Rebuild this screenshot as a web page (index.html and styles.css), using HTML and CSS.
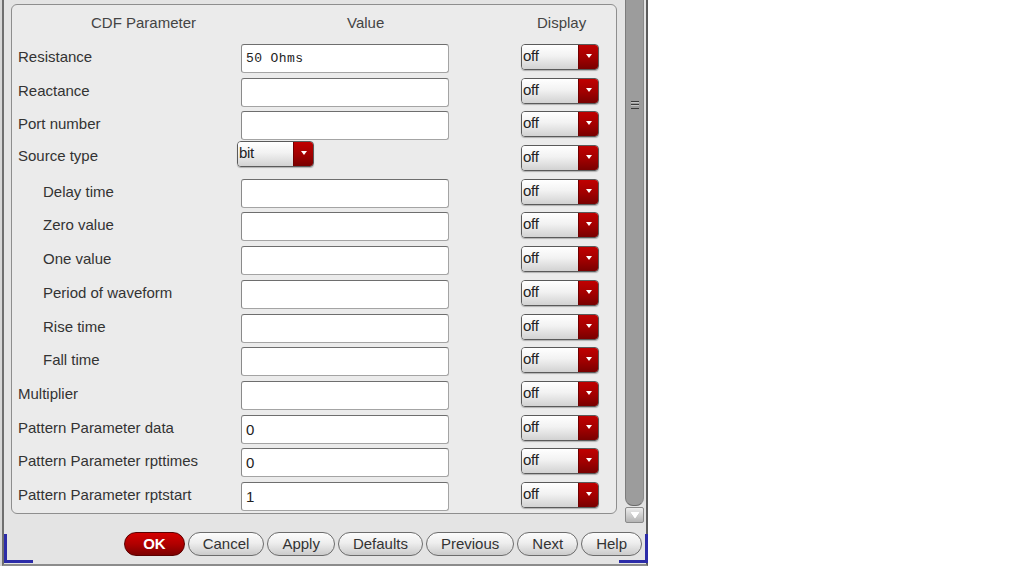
FILE: index.html
```html
<!DOCTYPE html>
<html>
<head>
<meta charset="utf-8">
<link rel="stylesheet" href="styles.css">
</head>
<body>
<div class="window">
  <div class="main">
    <section class="panel">
      <div class="head">
        <span class="h-param">CDF Parameter</span>
        <span class="h-value">Value</span>
        <span class="h-display">Display</span>
      </div>
      <div class="grid">
        <div class="lbl">Resistance</div>
        <div class="field mono">50 Ohms</div>
        <div class="combo"><span class="combo-text">off</span><span class="combo-btn"><i class="tri"></i></span></div>

        <div class="lbl">Reactance</div>
        <div class="field"></div>
        <div class="combo"><span class="combo-text">off</span><span class="combo-btn"><i class="tri"></i></span></div>

        <div class="lbl">Port number</div>
        <div class="field"></div>
        <div class="combo"><span class="combo-text">off</span><span class="combo-btn"><i class="tri"></i></span></div>

        <div class="lbl lbl-up">Source type</div>
        <div class="combo combo-src"><span class="combo-text">bit</span><span class="combo-btn"><i class="tri"></i></span></div>
        <div class="combo"><span class="combo-text">off</span><span class="combo-btn"><i class="tri"></i></span></div>

        <div class="lbl sub">Delay time</div>
        <div class="field"></div>
        <div class="combo"><span class="combo-text">off</span><span class="combo-btn"><i class="tri"></i></span></div>

        <div class="lbl sub">Zero value</div>
        <div class="field"></div>
        <div class="combo"><span class="combo-text">off</span><span class="combo-btn"><i class="tri"></i></span></div>

        <div class="lbl sub">One value</div>
        <div class="field"></div>
        <div class="combo"><span class="combo-text">off</span><span class="combo-btn"><i class="tri"></i></span></div>

        <div class="lbl sub">Period of waveform</div>
        <div class="field"></div>
        <div class="combo"><span class="combo-text">off</span><span class="combo-btn"><i class="tri"></i></span></div>

        <div class="lbl sub">Rise time</div>
        <div class="field"></div>
        <div class="combo"><span class="combo-text">off</span><span class="combo-btn"><i class="tri"></i></span></div>

        <div class="lbl sub">Fall time</div>
        <div class="field"></div>
        <div class="combo"><span class="combo-text">off</span><span class="combo-btn"><i class="tri"></i></span></div>

        <div class="lbl">Multiplier</div>
        <div class="field"></div>
        <div class="combo"><span class="combo-text">off</span><span class="combo-btn"><i class="tri"></i></span></div>

        <div class="lbl">Pattern Parameter data</div>
        <div class="field">0</div>
        <div class="combo"><span class="combo-text">off</span><span class="combo-btn"><i class="tri"></i></span></div>

        <div class="lbl">Pattern Parameter rpttimes</div>
        <div class="field">0</div>
        <div class="combo"><span class="combo-text">off</span><span class="combo-btn"><i class="tri"></i></span></div>

        <div class="lbl">Pattern Parameter rptstart</div>
        <div class="field">1</div>
        <div class="combo"><span class="combo-text">off</span><span class="combo-btn"><i class="tri"></i></span></div>
      </div>
    </section>
    <div class="scrollbar">
      <div class="thumb"><div class="grip"></div></div>
      <div class="arrow-down"><i class="arrow-tri"></i></div>
    </div>
  </div>
  <div class="buttons">
    <button class="btn btn-ok">OK</button>
    <button class="btn">Cancel</button>
    <button class="btn">Apply</button>
    <button class="btn">Defaults</button>
    <button class="btn">Previous</button>
    <button class="btn">Next</button>
    <button class="btn">Help</button>
  </div>
</div>
</body>
</html>
```

FILE: styles.css
```css
* { box-sizing: border-box; }
html, body { margin: 0; padding: 0; background: #ffffff; }
body {
  font-family: "Liberation Sans", Arial, sans-serif;
  font-size: 15px;
  color: #303030;
  width: 1013px;
  height: 568px;
  overflow: hidden;
}

.window {
  position: relative;
  margin-left: 2px;
  width: 646px;
  height: 566px;
  background: #e4e4e4;
  border-left: 2px solid #6e6e6e;
  border-right: 2px solid #5c5c5c;
  border-bottom: 2px solid #8c8c8c;
  box-shadow: -2px 0 0 #d6d6d6;
  padding-top: 4px;
}
.window::before,
.window::after {
  content: "";
  position: absolute;
  bottom: 1px;
  width: 26px;
  height: 26px;
  border-bottom: 3px solid #2c2ca8;
}
.window::before {
  left: 0;
  border-left: 3px solid #2c2ca8;
}
.window::after {
  right: -2px;
  border-right: 3px solid #2c2ca8;
}

.main {
  display: flex;
  align-items: flex-start;
}

.panel {
  margin-left: 7px;
  width: 606px;
  height: 510px;
  background: #ebebeb;
  border: 1px solid #8e8e8e;
  border-radius: 6px;
}

.head {
  display: grid;
  grid-template-columns: 229px 280px 78px;
  height: 39px;
  padding-top: 9px;
  line-height: 18px;
  color: #444;
}
.h-param { padding-left: 79px; }
.h-value { padding-left: 106px; }
.h-display { padding-left: 16px; }

.grid {
  display: grid;
  grid-template-columns: 229px 280px 78px;
  grid-auto-rows: 33.7px;
  align-items: start;
}

.lbl {
  padding-left: 6px;
  line-height: 26px;
  white-space: nowrap;
  color: #333;
}
.lbl.sub { padding-left: 31px; }
.lbl.lbl-up { line-height: 22px; }

.field {
  width: 208px;
  height: 29px;
  background: #ffffff;
  border: 1px solid #a4a4a4;
  border-top-color: #6e6e6e;
  border-left-color: #8a8a8a;
  border-radius: 3px;
  padding-left: 4px;
  line-height: 27px;
  color: #222;
}
.field.mono {
  font-family: "Liberation Mono", "DejaVu Sans Mono", monospace;
  font-size: 13px;
  padding-left: 4px;
  letter-spacing: 0.4px;
}

.combo {
  display: flex;
  width: 78px;
  height: 26px;
  border: 1px solid #5a5a5a;
  border-radius: 4px;
  overflow: hidden;
  box-shadow: 0 1px 1px rgba(0,0,0,0.25);
}
.combo-text {
  flex: 1;
  padding-left: 1px;
  line-height: 22px;
  background: linear-gradient(#ffffff 0%, #f2f2f2 45%, #d2d2d2 100%);
  color: #222;
  letter-spacing: -0.3px;
}
.combo-btn {
  width: 20px;
  display: flex;
  align-items: center;
  justify-content: center;
  padding-bottom: 2px;
  background: linear-gradient(#c00000 0%, #a00000 55%, #780000 100%);
  border-left: 1px solid #700000;
}
.tri {
  width: 0;
  height: 0;
  border-left: 3.5px solid transparent;
  border-right: 3.5px solid transparent;
  border-top: 4px solid #ffffff;
}
.combo-src {
  width: 77px;
  margin-left: -4px;
  margin-top: -4px;
}

.scrollbar {
  margin-left: 8px;
  margin-top: -4px;
  width: 19px;
  display: flex;
  flex-direction: column;
}
.thumb {
  height: 506px;
  background: #9c9c9c;
  border-left: 1px solid #7c7c7c;
  border-right: 1px solid #8a8a8a;
  border-bottom: 1px solid #6a6a6a;
  border-radius: 0 0 8px 8px;
  display: flex;
  justify-content: center;
  padding-top: 101px;
}
.grip {
  width: 8px;
  height: 8px;
  background: linear-gradient(#3c3c3c 0 1px, #c4c4c4 1px 2px, transparent 2px 3.5px,
                              #3c3c3c 3.5px 4.5px, #c4c4c4 4.5px 5.5px, transparent 5.5px 7px,
                              #3c3c3c 7px 8px);
}
.arrow-down {
  margin-top: 1px;
  height: 16px;
  background: linear-gradient(#ececec, #b4b4b4);
  border: 1px solid #8a8a8a;
  border-radius: 2px;
  display: flex;
  align-items: center;
  justify-content: center;
}
.arrow-tri {
  width: 0;
  height: 0;
  border-left: 5px solid transparent;
  border-right: 5px solid transparent;
  border-top: 7px solid #ffffff;
  filter: drop-shadow(0 0 0.6px #777);
}

.buttons {
  display: flex;
  justify-content: flex-end;
  gap: 3px;
  margin-top: 9px;
  padding-right: 4px;
}
.btn {
  height: 24px;
  padding: 0 14px;
  font-family: "Liberation Sans", Arial, sans-serif;
  font-size: 15px;
  color: #333;
  background: linear-gradient(#fcfcfc 0%, #eeeeee 45%, #cbcbcb 100%);
  border: 1px solid #6c6c6c;
  border-radius: 12px;
  line-height: 20px;
}
.btn-ok {
  padding: 0 18px;
  color: #ffffff;
  font-weight: bold;
  background: linear-gradient(#d40000 0%, #b00000 50%, #7c0000 100%);
  border-color: #5a0000;
}
```
